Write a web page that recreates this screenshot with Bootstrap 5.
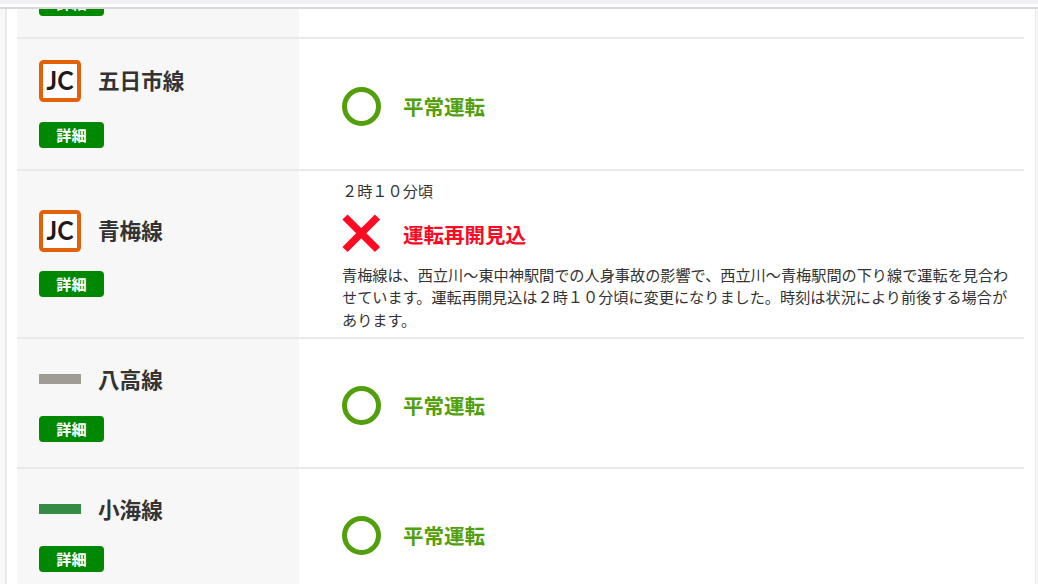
<!DOCTYPE html>
<html lang="ja">
<head>
<meta charset="utf-8">
<meta name="viewport" content="width=device-width, initial-scale=1">
<title>運行情報</title>
<link href="https://cdn.jsdelivr.net/npm/bootstrap@5.3.0/dist/css/bootstrap.min.css" rel="stylesheet">
<style>
body{font-family:"Noto Sans CJK JP",sans-serif;font-size:15.16px;line-height:22.7px;color:#333;background:#f7f7f7;height:584px}
.topbar{height:9px;background:#fff;border-top:4px solid #f0f1f5;border-bottom:2px solid #d8d8d9}
.panel{height:575px;margin:0 2px 0 5px;padding:0 11px 0 10px;background:#fff;border:solid #e9e9e9;border-width:0 1px 0 2px}
.line-row{height:130px;border-bottom:2px solid #e9e9e9}
.line-row.first{height:30px}
.line-row.mark-row{height:132px}
.line-row.delay{height:168px}
.line-head{width:282px;background:#f7f7f7;padding:0 0 6px 22px}
.mark-row .line-head{padding-bottom:0}
.delay .line-head{padding-bottom:1px}
.line-name{font-size:21.6px;line-height:40px;gap:17px}
.line-name span{padding-bottom:2px}
.line-name .stripe+span{padding:1px 0}
.line-name svg{width:42px;height:42px}
.stripe{width:42px;height:10px;margin-bottom:1px}
.detail{width:65px;height:26px;padding:0 0 2px;border:0;border-radius:4px;background:#008803;color:#fff;font-size:15.13px;line-height:24px;font-weight:700}
.line-head .detail{margin-top:16px}
.mark-row .detail{margin-top:20px}
.delay .detail{margin:19px 0 1px}
.first .detail{margin-top:-19px}
.line-body{padding:4px 14px 0 43px}
.status{font-size:20.5px;line-height:40px;gap:22px;color:#529f0c}
.status svg{width:39px;height:39px}
.delay .line-body{padding-top:8px}
.delay .status{margin:12px 0 9px}
.delay p{line-height:22.5px}
.stopped{color:#fa0a24}
</style>
</head>
<body class="overflow-hidden">
<svg class="d-none">
<symbol id="jc" viewBox="0 0 42 42"><rect x="2" y="2" width="38" height="38" rx="2.5" fill="#fff" stroke="#e56108" stroke-width="4"/><text x="7.6" y="30.4" font-family="Lato, sans-serif" font-size="26" font-weight="700" fill="#231815" textLength="27" lengthAdjust="spacingAndGlyphs">JC</text></symbol>
<symbol id="ok" viewBox="0 0 39 39"><circle cx="19.5" cy="19.5" r="17" fill="none" stroke="#529f0c" stroke-width="5"/></symbol>
<symbol id="stop" viewBox="0 0 39 39"><path d="M3 3 35.5 35.5M35.5 3 3 35.5" stroke="#ff0a23" stroke-width="7.4"/></symbol>
</svg>
<header class="topbar"></header>
<main class="panel overflow-hidden">
<section class="line-row first d-flex"><div class="line-head"><button class="btn detail d-block">詳細</button></div></section>
<section class="line-row mark-row d-flex">
<div class="line-head d-flex flex-column justify-content-center"><div class="line-name d-flex align-items-center fw-bold"><svg><use href="#jc"/></svg><span>五日市線</span></div><button class="btn detail">詳細</button></div>
<div class="line-body d-flex align-items-center"><div class="status d-flex align-items-center fw-bold"><svg><use href="#ok"/></svg><span>平常運転</span></div></div>
</section>
<section class="line-row delay d-flex">
<div class="line-head d-flex flex-column justify-content-center"><div class="line-name d-flex align-items-center fw-bold"><svg><use href="#jc"/></svg><span>青梅線</span></div><button class="btn detail">詳細</button></div>
<div class="line-body flex-fill"><div>２時１０分頃</div><div class="status stopped d-flex align-items-center fw-bold"><svg><use href="#stop"/></svg><span>運転再開見込</span></div><p class="m-0 text-nowrap">青梅線は、西立川〜東中神駅間での人身事故の影響で、西立川〜青梅駅間の下り線で運転を見合わ<br>せています。運転再開見込は２時１０分頃に変更になりました。時刻は状況により前後する場合が<br>あります。</p></div>
</section>
<section class="line-row d-flex">
<div class="line-head d-flex flex-column justify-content-center"><div class="line-name d-flex align-items-center fw-bold"><i class="stripe" style="background:#9f9d93"></i><span>八高線</span></div><button class="btn detail">詳細</button></div>
<div class="line-body d-flex align-items-center"><div class="status d-flex align-items-center fw-bold"><svg><use href="#ok"/></svg><span>平常運転</span></div></div>
</section>
<section class="line-row d-flex">
<div class="line-head d-flex flex-column justify-content-center"><div class="line-name d-flex align-items-center fw-bold"><i class="stripe" style="background:#358b43"></i><span>小海線</span></div><button class="btn detail">詳細</button></div>
<div class="line-body d-flex align-items-center"><div class="status d-flex align-items-center fw-bold"><svg><use href="#ok"/></svg><span>平常運転</span></div></div>
</section>
</main>
<script src="https://cdn.jsdelivr.net/npm/bootstrap@5.3.0/dist/js/bootstrap.bundle.min.js"></script>
</body>
</html>
